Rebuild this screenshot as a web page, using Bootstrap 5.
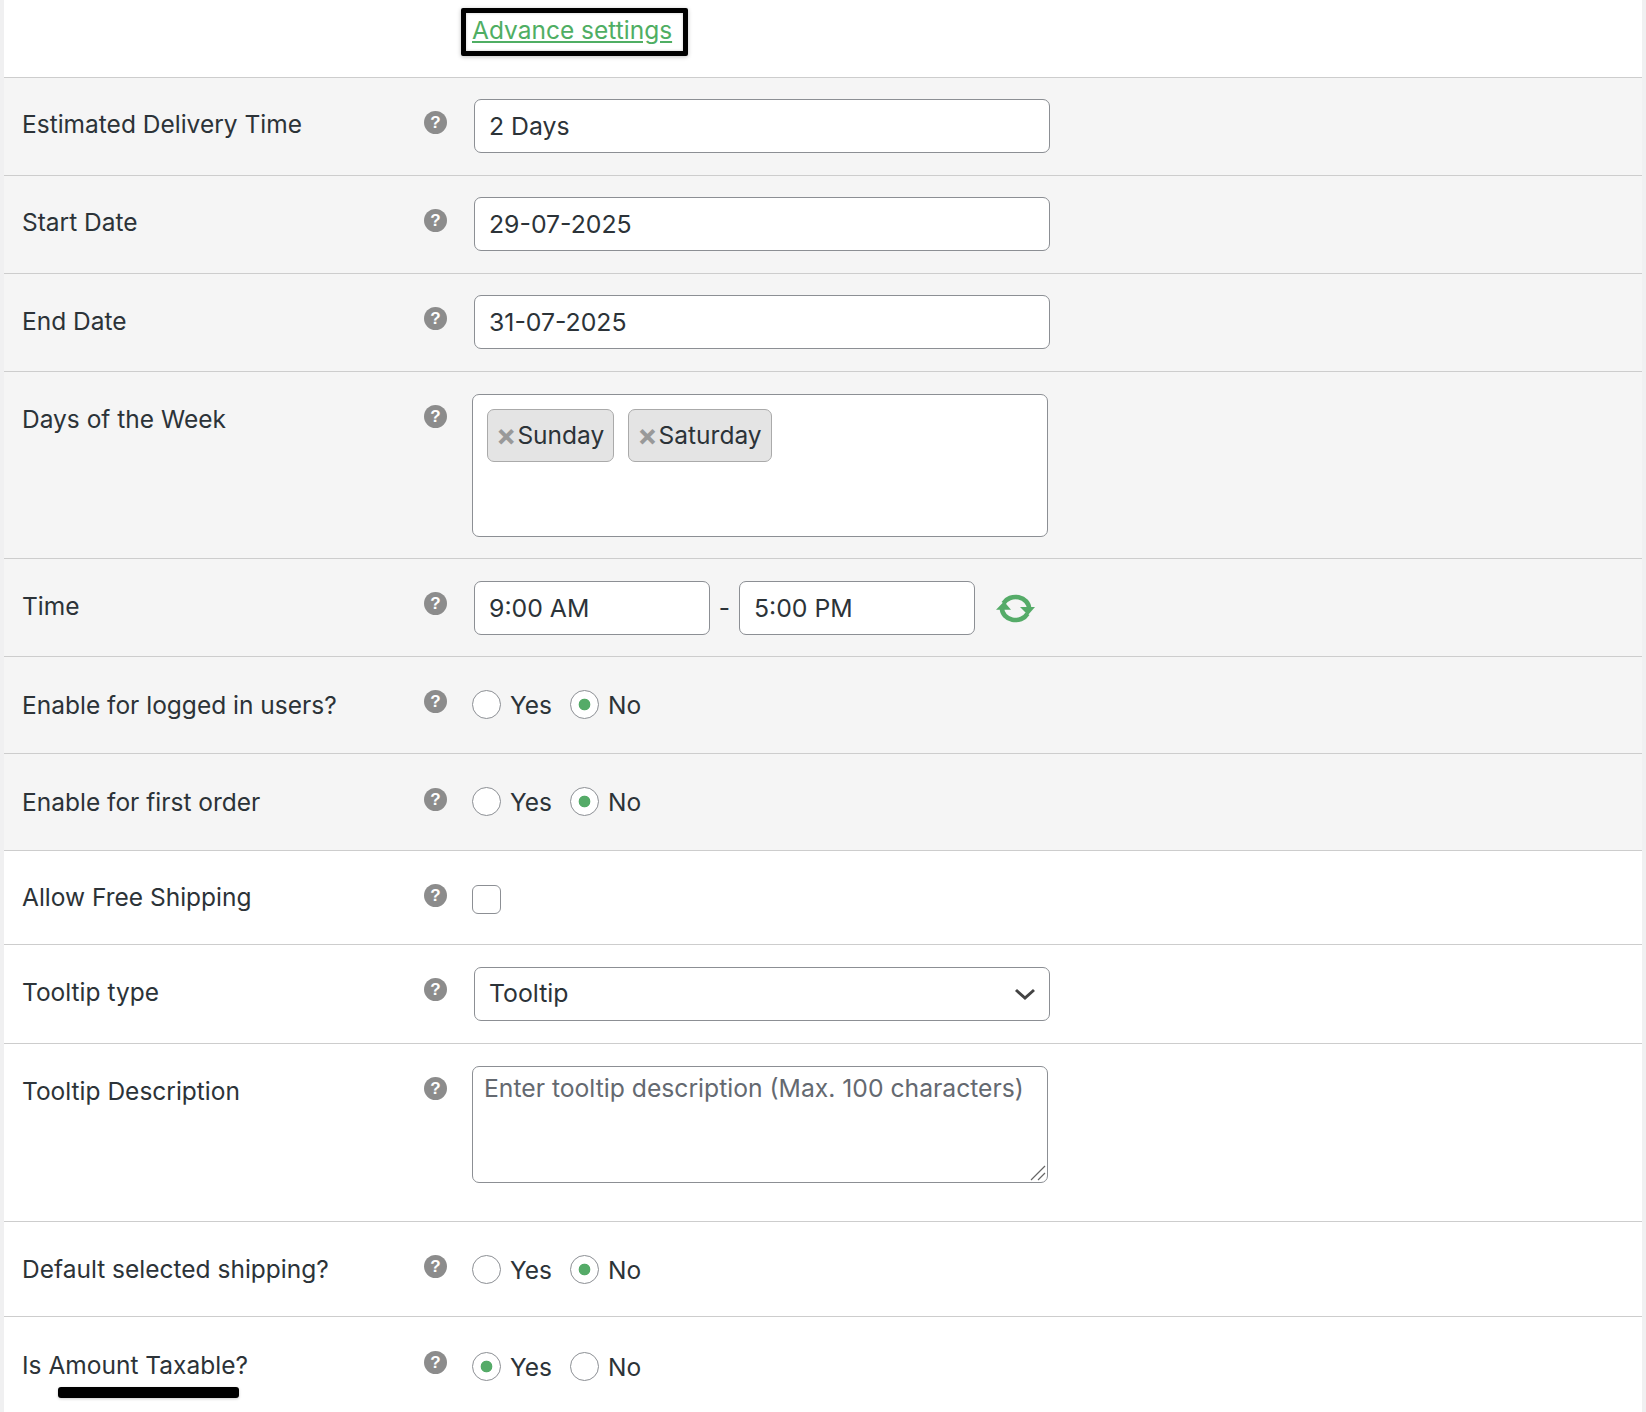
<!DOCTYPE html>
<html lang="en">
<head>
<meta charset="utf-8">
<title>Shipping settings</title>
<link rel="stylesheet" href="https://cdn.jsdelivr.net/npm/bootstrap@5.3.0/dist/css/bootstrap.min.css">
<style>
html,body{height:100%;overflow:hidden}
body{background:#f0f0f1;color:#2c3338;font-family:Inter,"Noto Sans",sans-serif;font-size:24.5px}
.sheet{position:relative;margin:0 4px;background:#fff;height:1412px;overflow:hidden}
.lead-row{height:77px;padding:8px 0 0 457px}
.adv-box{width:227px;height:48px;border:5px solid #000;border-radius:2px;box-shadow:0 1px 4px rgba(0,0,0,.25),inset 0 0 3px rgba(0,0,0,.2);background:#fff;padding-left:6px;line-height:34px}
.adv-box a{color:#4fae63}
.set-row{border-top:1px solid #cdcdcd;background:#fff}
.set-row.tinted{background:#f5f5f5}
.label-col{width:468px;flex:none;padding:31px 25px 0 18px}
.label-text{line-height:30px;flex-grow:1;color:#2c3338}
.help-dot{width:23px;height:23px;border-radius:50%;background:#8c8c8c;color:#fff;font:700 17px/23px "Liberation Sans",sans-serif;text-align:center;margin-top:2px}
.drop-one .label-text{margin-top:1px}
.drop-two .label-text{margin-top:2px}
.dot-low .help-dot{margin-top:3px}
.val-col{flex-grow:1;padding-top:21px}
.val-col.pad-input{padding-bottom:22px;padding-left:2px}
.val-col.pad-input.top-more{padding-top:22px}
.val-col.pad-input.time-row{padding-top:22px;padding-bottom:21px}
.val-col.pad-tags{padding-top:22px;padding-bottom:21px}
.val-col.pad-radio{padding-top:32px;padding-bottom:33px}
.val-col.pad-radio.low-end{padding-top:34px;padding-bottom:30px}
.val-col.pad-radio.low-end.short-row{padding-top:32px;padding-bottom:31px}
.val-col.pad-check{padding-top:34px;padding-bottom:30px}
.field-wide.form-control,.field-wide.form-select,.field-half.form-control{height:54px;border:1px solid #8c8f94;border-radius:7px;font-size:24.8px;color:#2c3338;padding:0 14px;background-color:#fff;box-shadow:none}
.field-wide{width:576px}
.field-half.form-control{width:236px;flex:none}
.field-wide.form-select{background-size:22px 12px;background-position:right 13px center;background-image:url("data:image/svg+xml,%3Csvg xmlns='http://www.w3.org/2000/svg' viewBox='0 0 22 12'%3E%3Cpath d='M2 2l9 8 9-8' fill='none' stroke='%23444' stroke-width='3'/%3E%3C/svg%3E")}
.tag-box{width:576px;height:143px;background:#fff;border:1px solid #8c8f94;border-radius:7px;padding:14px;gap:14px}
.day-tag{height:53px;background:#e4e4e4;border:1px solid #aaa;border-radius:7px;padding:0 9px 0 8px;line-height:50px}
.day-x{color:#999;font-weight:700;margin-right:1px;font-size:30px;line-height:30px;vertical-align:-2px}
.dash-mark{width:29px;flex:none;text-align:center}
.spin-icon{width:40px;height:29px;margin-left:21px}
.pick-radio.form-check-input,.pick-check.form-check-input{width:29px;height:29px;margin:0;border:1px solid #8c8f94;background-color:#fff;flex:none;box-shadow:none}
.pick-radio.form-check-input:checked{background-image:radial-gradient(circle at center,#55ab68 5.5px,transparent 6.2px);border-color:#8c8f94;background-color:#fff}
.pick-check.form-check-input{border-radius:6px}
.pick-label{margin:0 18px 0 9px;line-height:29px;padding-top:2px}
.note-area.form-control{width:576px;height:117px;border:1px solid #8c8f94;border-radius:7px;font-size:24.7px;padding:3px 11px;resize:none;display:block;background:#fff;box-shadow:none}
.note-area::placeholder{color:#646970;opacity:1}
.note-wrap{width:576px;height:117px}
.grip-mark{position:absolute;right:2px;bottom:2px;width:16px;height:16px}
.pad-note{padding-top:22px;padding-bottom:38px}
.redact-bar{position:absolute;left:54px;top:1387px;width:181px;height:11px;background:#000;border-radius:3px;box-shadow:0 1px 3px rgba(0,0,0,.2)}
</style>
</head>
<body>
<main class="sheet">
  <div class="lead-row">
    <div class="adv-box"><a href="#">Advance settings</a></div>
  </div>

  <div class="set-row tinted d-flex">
    <div class="label-col d-flex align-items-start"><span class="label-text">Estimated Delivery Time</span><span class="help-dot">?</span></div>
    <div class="val-col pad-input"><input class="form-control field-wide" type="text" value="2 Days"></div>
  </div>
  <div class="set-row tinted d-flex">
    <div class="label-col d-flex align-items-start"><span class="label-text">Start Date</span><span class="help-dot">?</span></div>
    <div class="val-col pad-input"><input class="form-control field-wide" type="text" value="29-07-2025"></div>
  </div>
  <div class="set-row tinted d-flex drop-one">
    <div class="label-col d-flex align-items-start"><span class="label-text">End Date</span><span class="help-dot">?</span></div>
    <div class="val-col pad-input"><input class="form-control field-wide" type="text" value="31-07-2025"></div>
  </div>
  <div class="set-row tinted d-flex drop-one">
    <div class="label-col d-flex align-items-start"><span class="label-text">Days of the Week</span><span class="help-dot">?</span></div>
    <div class="val-col pad-tags">
      <div class="tag-box d-flex align-items-start">
        <span class="day-tag"><span class="day-x">×</span>Sunday</span>
        <span class="day-tag"><span class="day-x">×</span>Saturday</span>
      </div>
    </div>
  </div>
  <div class="set-row tinted d-flex drop-one">
    <div class="label-col d-flex align-items-start"><span class="label-text">Time</span><span class="help-dot">?</span></div>
    <div class="val-col pad-input time-row d-flex align-items-center">
      <input class="form-control field-half" type="text" value="9:00 AM">
      <span class="dash-mark">-</span>
      <input class="form-control field-half" type="text" value="5:00 PM">
      <svg class="spin-icon" viewBox="0 0 40 29" aria-hidden="true"><path d="M7.5 9.2A13.5 11.5 0 0 1 33 14.5" fill="none" stroke="#55ab68" stroke-width="4.6"/><path d="M31.5 19.8A13.5 11.5 0 0 1 6 14.5" fill="none" stroke="#55ab68" stroke-width="4.6"/><path d="M0 15.7h15L8 7.5zM24 13h15l-7 8z" fill="#55ab68"/></svg>
    </div>
  </div>
  <div class="set-row tinted d-flex drop-two">
    <div class="label-col d-flex align-items-start"><span class="label-text">Enable for logged in users?</span><span class="help-dot">?</span></div>
    <div class="val-col pad-radio d-flex align-items-center">
      <input class="form-check-input pick-radio" type="radio" name="rLogged"><label class="pick-label">Yes</label>
      <input class="form-check-input pick-radio" type="radio" name="rLogged" checked><label class="pick-label">No</label>
    </div>
  </div>
  <div class="set-row tinted d-flex drop-two dot-low">
    <div class="label-col d-flex align-items-start"><span class="label-text">Enable for first order</span><span class="help-dot">?</span></div>
    <div class="val-col pad-radio d-flex align-items-center">
      <input class="form-check-input pick-radio" type="radio" name="rFirst"><label class="pick-label">Yes</label>
      <input class="form-check-input pick-radio" type="radio" name="rFirst" checked><label class="pick-label">No</label>
    </div>
  </div>
  <div class="set-row d-flex">
    <div class="label-col d-flex align-items-start"><span class="label-text">Allow Free Shipping</span><span class="help-dot">?</span></div>
    <div class="val-col pad-check"><input class="form-check-input pick-check d-block" type="checkbox"></div>
  </div>
  <div class="set-row d-flex drop-one">
    <div class="label-col d-flex align-items-start"><span class="label-text">Tooltip type</span><span class="help-dot">?</span></div>
    <div class="val-col pad-input top-more"><select class="form-select field-wide"><option>Tooltip</option></select></div>
  </div>
  <div class="set-row d-flex drop-one">
    <div class="label-col d-flex align-items-start"><span class="label-text">Tooltip Description</span><span class="help-dot">?</span></div>
    <div class="val-col pad-note">
      <div class="note-wrap position-relative">
        <textarea class="form-control note-area" placeholder="Enter tooltip description (Max. 100 characters)"></textarea>
        <svg class="grip-mark" viewBox="0 0 16 16" aria-hidden="true"><path d="M1 15L15 1M8 15l7-7" stroke="#666" stroke-width="1.2" fill="none"/></svg>
      </div>
    </div>
  </div>
  <div class="set-row d-flex drop-one">
    <div class="label-col d-flex align-items-start"><span class="label-text">Default selected shipping?</span><span class="help-dot">?</span></div>
    <div class="val-col pad-radio low-end short-row d-flex align-items-center">
      <input class="form-check-input pick-radio" type="radio" name="rDefault"><label class="pick-label">Yes</label>
      <input class="form-check-input pick-radio" type="radio" name="rDefault" checked><label class="pick-label">No</label>
    </div>
  </div>
  <div class="set-row d-flex drop-two dot-low">
    <div class="label-col d-flex align-items-start"><span class="label-text">Is Amount Taxable?</span><span class="help-dot">?</span></div>
    <div class="val-col pad-radio low-end d-flex align-items-center">
      <input class="form-check-input pick-radio" type="radio" name="rTax" checked><label class="pick-label">Yes</label>
      <input class="form-check-input pick-radio" type="radio" name="rTax"><label class="pick-label">No</label>
    </div>
  </div>
  <div class="redact-bar"></div>
</main>
<script src="https://cdn.jsdelivr.net/npm/bootstrap@5.3.0/dist/js/bootstrap.bundle.min.js"></script>
</body>
</html>
